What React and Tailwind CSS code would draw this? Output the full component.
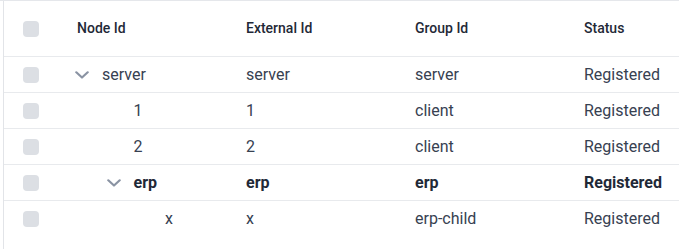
import React from 'react';

const ROWS = [
  { id: 'server', ext: 'server', group: 'server', status: 'Registered', depth: 0, hasChildren: true },
  { id: '1', ext: '1', group: 'client', status: 'Registered', depth: 1 },
  { id: '2', ext: '2', group: 'client', status: 'Registered', depth: 1 },
  { id: 'erp', ext: 'erp', group: 'erp', status: 'Registered', depth: 1, hasChildren: true, bold: true },
  { id: 'x', ext: 'x', group: 'erp-child', status: 'Registered', depth: 2 },
];

const Chevron = () => (
  <svg width="14" height="8" viewBox="0 0 14 8" fill="none" className="text-[#8a93a3]">
    <path d="M1.3 1.3 L7 6.5 L12.7 1.3" stroke="currentColor" strokeWidth="2.2" strokeLinecap="round" strokeLinejoin="round" />
  </svg>
);

const Box = () => <div className="w-4 h-4 rounded-[4px] bg-[#dcdfe4]" />;

const App = () => {
  return (
    <div className="w-[679px] h-[249px] bg-white overflow-hidden border-t border-[#e5e7eb]" style={{ fontFamily: 'Roboto, "Noto Sans", sans-serif' }}>
      <div className="ml-[3px] h-full border-l border-[#e2e4e8]">
        {/* Header */}
        <div className="flex h-[56px] items-center border-b border-[#e8eaed] text-[14px] font-medium text-[#1f2937]">
          <div className="w-[57px] shrink-0 pl-[19px]"><Box /></div>
          <div className="w-[169px] shrink-0 pl-[16px]">Node Id</div>
          <div className="w-[169px] shrink-0 pl-[16px]">External Id</div>
          <div className="w-[169px] shrink-0 pl-[16px]">Group Id</div>
          <div className="w-[169px] shrink-0 pl-[16px]">Status</div>
        </div>

        {/* Rows */}
        {ROWS.map((r, i) => (
          <div
            key={r.id}
            className={`flex h-[36px] items-center text-[16px] ${i < ROWS.length - 1 ? 'border-b border-[#e8eaed]' : ''} ${r.bold ? 'font-bold text-[#1f2937]' : 'text-[#374151]'}`}
          >
            <div className="w-[57px] shrink-0 pl-[19px]"><Box /></div>
            <div className="w-[169px] shrink-0 pl-[14px] flex items-center">
              <div style={{ width: r.depth * 31.5 }} className="shrink-0" />
              <div className="w-[27px] shrink-0 flex items-center">{r.hasChildren && <Chevron />}</div>
              <span>{r.id}</span>
            </div>
            <div className="w-[169px] shrink-0 pl-[16px]">{r.ext}</div>
            <div className="w-[169px] shrink-0 pl-[16px]">{r.group}</div>
            <div className="w-[169px] shrink-0 pl-[16px] whitespace-nowrap">{r.status}</div>
          </div>
        ))}
      </div>
    </div>
  );
};

export default App;
